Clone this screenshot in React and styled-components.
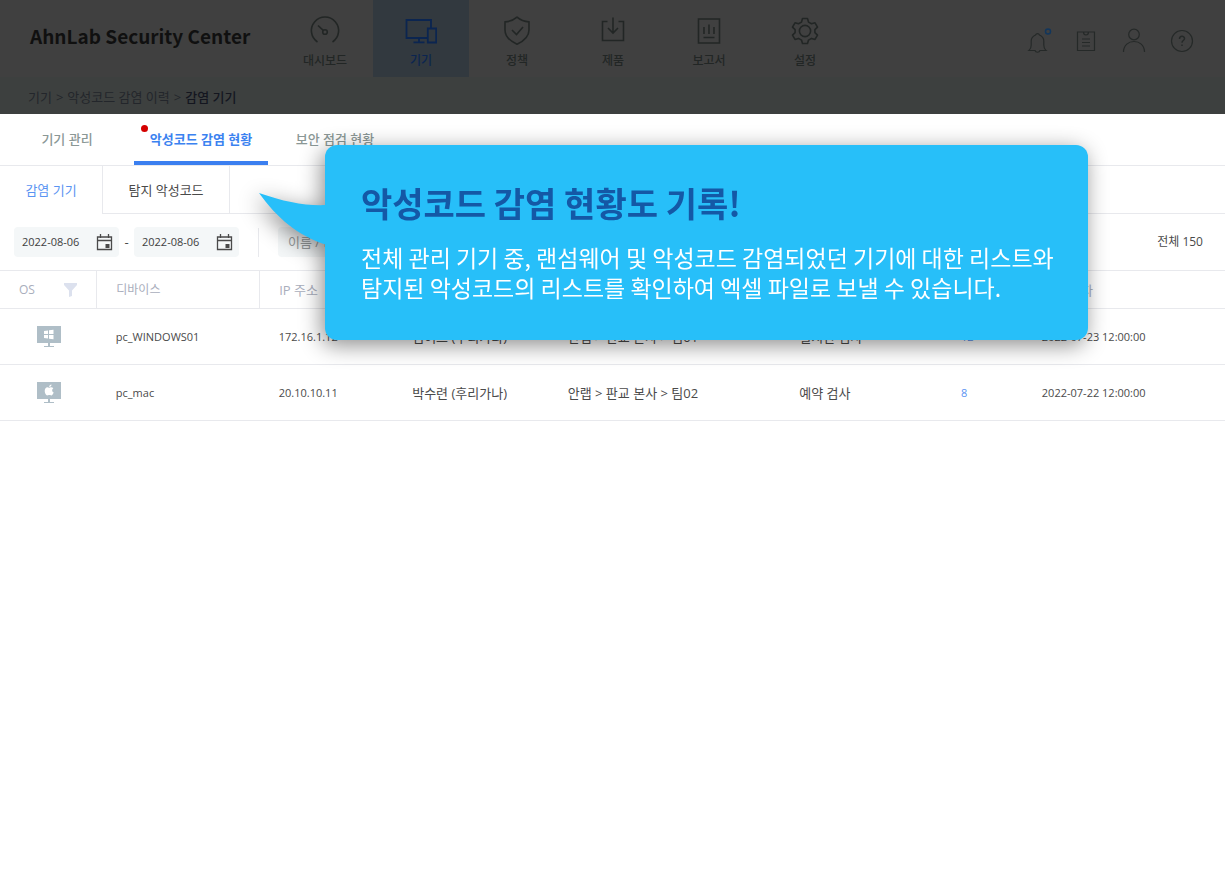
import React from "react";
import styled, { createGlobalStyle } from "styled-components";

const GlobalStyle = createGlobalStyle`
  * { box-sizing: border-box; }
  body {
    margin: 0;
    background: #fff;
    color: #4a4a4a;
    font-family: "Open Sans", "Noto Sans CJK KR", sans-serif;
    font-size: 13px;
    line-height: 20px;
  }
  button, input { font: inherit; }
  a { color: inherit; text-decoration: none; }
`;

const Page = styled.div`
  position: relative;
`;

const TopBar = styled.header`
  display: flex;
  align-items: stretch;
  height: 77px;
  background: #404040;
  color: #222625;
`;

const Brand = styled.h1`
  width: 277px;
  margin: 0;
  padding: 22px 0 0 30px;
  font: 700 19px/28px "Noto Sans CJK KR", sans-serif;
  color: #101010;
  white-space: nowrap;
`;

const MainNav = styled.nav`
  display: flex;
`;

const NavItem = styled.a`
  display: flex;
  flex-direction: column;
  align-items: center;
  gap: 4px;
  width: 96px;
  padding-top: 15px;
  font-size: 12px;
  font-weight: 500;
  background: ${(p) => (p.$active ? "#32393f" : "transparent")};
  color: ${(p) => (p.$active ? "#0b2550" : "#222625")};
`;

const Tools = styled.div`
  display: flex;
  align-items: center;
  gap: 16px;
  margin-left: auto;
  padding: 5px 27px 0 0;
`;

const ToolButton = styled.button`
  display: flex;
  padding: 0;
  border: 0;
  background: none;
  color: #252928;
`;

const Crumbs = styled.nav`
  display: flex;
  gap: 4px;
  height: 37px;
  padding: 10px 28px 0;
  background: #3d403f;
  color: #23262b;

  strong {
    color: #14161f;
    font-weight: 500;
  }
`;

const Tabs = styled.nav`
  display: flex;
  height: 52px;
  border-bottom: 1px solid #e8e9ed;
`;

const Tab = styled.a`
  position: relative;
  width: 134px;
  padding-top: 15px;
  text-align: center;
  font-weight: ${(p) => (p.$active ? 700 : 500)};
  color: ${(p) => (p.$active ? "#3b82f0" : "#8b9896")};
  border-bottom: 4px solid ${(p) => (p.$active ? "#3b7ff0" : "transparent")};
`;

const Dot = styled.span`
  position: absolute;
  top: 11px;
  left: 7px;
  width: 7px;
  height: 7px;
  border-radius: 50%;
  background: #d40000;
`;

const SubTabs = styled.nav`
  display: flex;
  height: 48px;
  border-bottom: 1px solid #e8e9ed;
`;

const SubTab = styled.a`
  width: ${(p) => (p.$active ? 102 : 128)}px;
  height: ${(p) => (p.$active ? 48 : 47)}px;
  padding-top: 14px;
  text-align: center;
  background: #fff;
  color: ${(p) => (p.$active ? "#5a94f2" : "#4a4a4a")};
  border: solid #e8e9ed;
  border-width: ${(p) => (p.$active ? "0" : "0 1px")};
`;

const Filters = styled.div`
  display: flex;
  align-items: center;
  height: 56px;
  padding: 0 22px 0 14px;
`;

const DateField = styled.label`
  display: flex;
  align-items: center;
  width: 105px;
  height: 30px;
  padding: 0 6px 0 8px;
  border-radius: 4px;
  background: #f4f7f8;
`;

const DateInput = styled.input`
  flex: 1;
  min-width: 0;
  padding: 0;
  border: 0;
  background: none;
  color: #404040;
  font-size: 11px;
`;

const Dash = styled.span`
  width: 15px;
  text-align: center;
`;

const Divider = styled.span`
  width: 1px;
  height: 29px;
  margin: 0 19px;
  background: #e8e9ed;
`;

const SearchInput = styled.input`
  width: 240px;
  height: 30px;
  padding: 0 10px;
  border: 0;
  border-radius: 4px;
  background: #f4f7f8;

  &::placeholder { color: #9a9fa0; opacity: 1; }
`;

const Total = styled.span`
  margin-left: auto;
  font-size: 12px;
`;

const DeviceTable = styled.table`
  width: 100%;
  border-collapse: collapse;
  table-layout: fixed;
  border-top: 1px solid #e8e9ed;
`;

const Col = styled.col`
  width: ${(p) => p.$share}%;
`;

const HeadCell = styled.th`
  height: 38px;
  padding: 0 0 0 19px;
  text-align: left;
  font-size: ${(p) => (p.$ruled ? 12 : 13)}px;
  font-weight: 400;
  color: #a9aebc;
  border-bottom: 1px solid #e8e9ed;
  border-right: ${(p) => (p.$ruled ? "1px solid #e8e9ed" : "0")};
`;

const HeadInner = styled.div`
  display: flex;
  justify-content: space-between;
  align-items: center;
  padding-right: 19px;
`;

const Cell = styled.td`
  height: 56px;
  padding: 0 0 0 19px;
  font-size: ${(p) => (p.$latin ? 11 : 13)}px;
  white-space: nowrap;
  border-bottom: 1px solid #e8e9ed;
  color: #4a4a4a;

  svg { display: block; margin-left: 18px; }
  a { color: #5a94f2; }
`;

const Callout = styled.aside`
  position: absolute;
  top: 145px;
  left: 325px;
  width: 763px;
  height: 195px;
  padding: 32px 36px;
  border-radius: 12px;
  background: #27bff9;
  color: #fff;
  font-family: "Noto Sans CJK KR", sans-serif;
  filter: drop-shadow(-3px 5px 11px rgba(0, 0, 0, 0.45));
`;

const Pointer = styled.svg`
  position: absolute;
  top: 48px;
  left: -66px;
`;

const CalloutTitle = styled.h2`
  margin: 0 0 13px;
  font-size: 34px;
  font-weight: 700;
  line-height: 52px;
  color: #1458a6;
  white-space: nowrap;
`;

const CalloutText = styled.p`
  margin: 0;
  font-size: 23px;
  font-weight: 400;
  line-height: 30px;
  white-space: nowrap;
`;

const Icon = ({ size = 32, children, w = 1.6 }) => (
  <svg width={size} height={size} viewBox={`0 0 ${size} ${size}`} fill="none" stroke="currentColor" strokeWidth={w} aria-hidden="true">
    {children}
  </svg>
);

const NAV = [
  ["대시보드", <Icon><path d="M8.5 27A13.6 13.6 0 1 1 23.5 27" /><circle cx="16" cy="17" r="2.3" /><path d="M14.2 15.3 9 10.5" /></Icon>],
  ["기기", <Icon w={1.8}><path d="M22.5 23H1.5V5H26v8.500" /><path d="M22.800 13.500h8.400v14h-8.400z" /><path d="M14 23v4M8.500 27.300h11" /></Icon>],
  ["정책", <Icon><path d="M16 2.200c3.500 3 7.500 4.500 12 4.700v8c0 6-5 11-12 14.300C9 26 4 21 4 15V6.900c4.500-.2 8.500-1.700 12-4.700z" /><path d="m11 15 4.500 4.500 6.500-7.500" /></Icon>],
  ["제품", <Icon><path d="M10.500 6.500H5.500v19h21v-19h-5M16 2.500V18M11 13l5 5 5-5" /></Icon>],
  ["보고서", <Icon><path d="M5.500 4h21v24h-21zM11 12v7M16 9.500V19M21 12v7M10.500 22.500h11" /></Icon>],
  ["설정", <Icon><circle cx="16" cy="16" r="5.600" /><path d="M13.500 3.500h5l1 3.600 3 1.700 3.500-1 2.500 4.300-2.600 2.500v3l2.600 2.500-2.500 4.300-3.500-1-3 1.700-1 3.400h-5l-1-3.400-3-1.700-3.500 1-2.500-4.300 2.600-2.500v-3l-2.600-2.500L6 7.800l3.500 1 3-1.700z" strokeLinejoin="round" /></Icon>],
];

const TOOLS = [
  ["알림", <Icon w={1.2}><path d="M7 25.500c1.700-1.400 2.200-3 2.200-5.500v-4c0-3 2.300-5 4.300-6 .8-1.800 3.200-1.800 4 0 2 1 4.300 3 4.300 6v4c0 2.500.5 4.100 2.200 5.500h-6c-.7 2.300-4.300 2.300-5 0z" /><circle cx="26" cy="6.500" r="2.500" stroke="#12365c" strokeWidth="1.500" /></Icon>],
  ["목록", <Icon w={1.2}><path d="M7.500 7h17v18.500h-17zM13.500 7c0 4 5 4 5 0M12 14h8M12 17.500h8M12 21h8" /></Icon>],
  ["사용자", <Icon w={1.2}><circle cx="16" cy="9.500" r="5.300" /><path d="M5.500 27c0-14 21-14 21 0" /></Icon>],
  ["도움말", <Icon w={1.2}><circle cx="16" cy="16" r="10.500" /><path d="M13.500 14c0-3.500 5-3.500 5-.5 0 2-2.500 2-2.500 4.200M16 19.500V21" strokeWidth="1.500" /></Icon>],
];

const CalendarIcon = () => (
  <Icon size={17} w={1.3}>
    <path d="M1.500 3h14v12.500h-14zM1.500 6.500h14M4.500 0v4M12.500 0v4" />
    <path d="M9.500 10h4v4h-4z" fill="currentColor" stroke="none" />
  </Icon>
);

const OsIcon = ({ os }) => (
  <svg width="24" height="24" viewBox="0 0 24 24" role="img" aria-label={os}>
    <path d="M0 1h24v17H0z" fill="#afbec7" />
    <path d="M11 18h2v3h4v1H7v-1h4z" fill="#afbec7" />
    {os === "Windows" ? (
      <path d="M7 6l4-.6V9H7zM12 5.300 16.500 4.700V9H12zM7 10h4v3.600L7 13zM12 10h4.500v4.300L12 13.700z" fill="#fff" />
    ) : (
      <path d="M14.500 3.500c.1 1.400-1 2.500-2.300 2.500-.1-1.300 1-2.400 2.300-2.500zM12 6.800c.7 0 1.300-.6 2.300-.6.800 0 1.500.4 2 1-1.700 1-1.500 3.500.4 4.300-.5 1.500-1.500 3-2.500 3-.8 0-1.100-.4-2-.4s-1.300.4-2 .4C9 14.500 7.700 12 7.700 10c0-2.300 1.300-3.700 2.700-3.700.7 0 1.200.5 1.600.5z" fill="#fff" />
    )}
  </svg>
);

const COLUMNS = [
  ["OS", 7.9], ["디바이스", 13.3], ["IP 주소", 10.9], ["사용자", 12.7], ["그룹", 18.9],
  ["검사 유형", 13.2], ["감염 수", 6.6], ["검사 일자", 16.5],
];

const ROWS = [
  ["Windows", "pc_WINDOWS01", "172.16.1.12", "김어드 (후리가나)", "안랩 > 판교 본사 > 팀01", "실시간 검사", "12", "2022-07-23 12:00:00"],
  ["Mac", "pc_mac", "20.10.10.11", "박수련 (후리가나)", "안랩 > 판교 본사 > 팀02", "예약 검사", "8", "2022-07-22 12:00:00"],
];

export default function App() {
  return (
    <Page>
      <GlobalStyle />
      <TopBar>
        <Brand>AhnLab Security Center</Brand>
        <MainNav>
          {NAV.map(([label, icon]) => (
            <NavItem href="#" key={label} $active={label === "기기"}>{icon}{label}</NavItem>
          ))}
        </MainNav>
        <Tools>
          {TOOLS.map(([label, icon]) => (
            <ToolButton key={label} type="button" aria-label={label}>{icon}</ToolButton>
          ))}
        </Tools>
      </TopBar>
      <Crumbs>
        <a href="#">기기</a><span>&gt;</span><a href="#">악성코드 감염 이력</a><span>&gt;</span><strong>감염 기기</strong>
      </Crumbs>
      <Tabs>
        <Tab href="#">기기 관리</Tab>
        <Tab href="#" $active><Dot />악성코드 감염 현황</Tab>
        <Tab href="#">보안 점검 현황</Tab>
      </Tabs>
      <SubTabs>
        <SubTab href="#" $active>감염 기기</SubTab>
        <SubTab href="#">탐지 악성코드</SubTab>
      </SubTabs>
      <Filters>
        <DateField><DateInput aria-label="시작일" defaultValue="2022-08-06" /><CalendarIcon /></DateField>
        <Dash>-</Dash>
        <DateField><DateInput aria-label="종료일" defaultValue="2022-08-06" /><CalendarIcon /></DateField>
        <Divider />
        <SearchInput aria-label="검색" placeholder="이름 / IP 주소" />
        <Total>전체 150</Total>
      </Filters>
      <DeviceTable>
        <colgroup>{COLUMNS.map(([name, share]) => <Col key={name} $share={share} />)}</colgroup>
        <thead>
          <tr>
            {COLUMNS.map(([name], i) => (
              <HeadCell key={name} $ruled={i < 2}>
                {i === 0 ? (
                  <HeadInner>
                    {name}
                    <svg width="13" height="14" viewBox="0 0 13 14" aria-hidden="true"><path d="M0 0h13v2L8 7.500V13l-3 1V7.500L0 2z" fill="#dce1ee" /></svg>
                  </HeadInner>
                ) : name}
              </HeadCell>
            ))}
          </tr>
        </thead>
        <tbody>
          {ROWS.map((row) => (
            <tr key={row[1]}>
              {row.map((value, i) => (
                <Cell key={i} $latin={[1, 2, 6, 7].includes(i)}>
                  {i === 0 ? <OsIcon os={value} /> : i === 6 ? <a href="#">{value}</a> : value}
                </Cell>
              ))}
            </tr>
          ))}
        </tbody>
      </DeviceTable>
      <Callout>
        <Pointer width="68" height="54" viewBox="0 0 68 54" aria-hidden="true">
          <path d="M0 0C26 9 46 13 68 12V52C39 43 18 25 0 0z" fill="#27bff9" />
        </Pointer>
        <CalloutTitle>악성코드 감염 현황도 기록!</CalloutTitle>
        <CalloutText>
          전체 관리 기기 중, 랜섬웨어 및 악성코드 감염되었던 기기에 대한 리스트와<br />
          탐지된 악성코드의 리스트를 확인하여 엑셀 파일로 보낼 수 있습니다.
        </CalloutText>
      </Callout>
    </Page>
  );
}
